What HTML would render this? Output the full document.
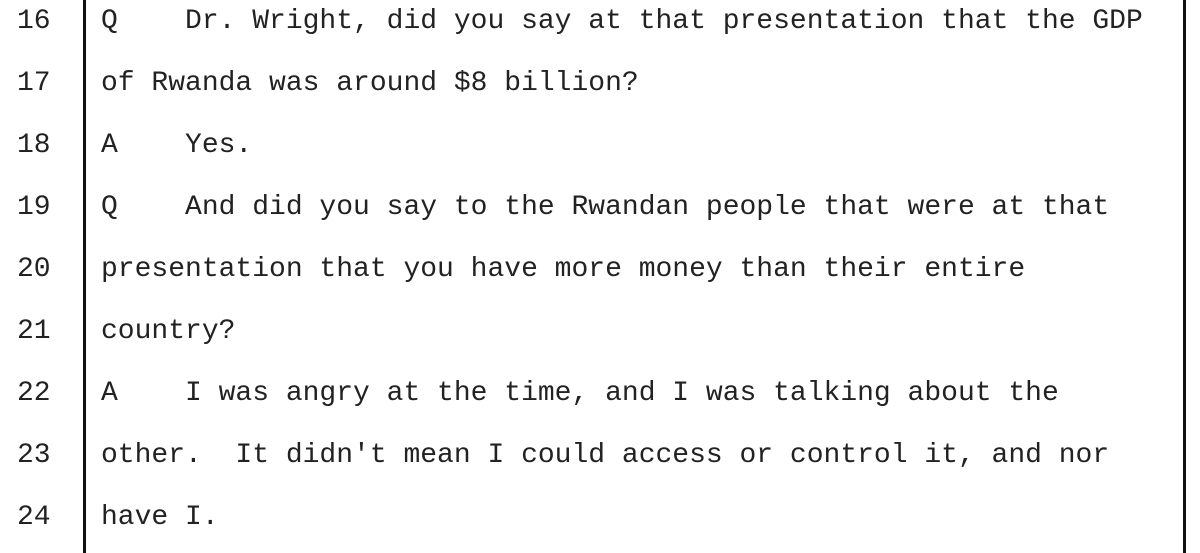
<!DOCTYPE html>
<html><head><meta charset="utf-8"><style>
html,body{margin:0;padding:0;background:#fff;width:1200px;height:553px;overflow:hidden;position:relative}
.l{position:absolute;font-family:"Liberation Mono","Courier New",monospace;font-size:28px;line-height:62px;color:#222;white-space:pre;height:62px}
.n{left:17px}
.t{left:101px}
.bar{position:absolute;top:0;height:553px;width:3px;background:#111}
</style></head><body>
<div class="bar" style="left:83px"></div>
<div class="bar" style="left:1183px"></div>
<div class="l n" style="top:-9px">16</div><div class="l t" style="top:-9px">Q    Dr. Wright, did you say at that presentation that the GDP</div>
<div class="l n" style="top:53px">17</div><div class="l t" style="top:53px">of Rwanda was around $8 billion?</div>
<div class="l n" style="top:115px">18</div><div class="l t" style="top:115px">A    Yes.</div>
<div class="l n" style="top:177px">19</div><div class="l t" style="top:177px">Q    And did you say to the Rwandan people that were at that</div>
<div class="l n" style="top:239px">20</div><div class="l t" style="top:239px">presentation that you have more money than their entire</div>
<div class="l n" style="top:301px">21</div><div class="l t" style="top:301px">country?</div>
<div class="l n" style="top:363px">22</div><div class="l t" style="top:363px">A    I was angry at the time, and I was talking about the</div>
<div class="l n" style="top:425px">23</div><div class="l t" style="top:425px">other.  It didn't mean I could access or control it, and nor</div>
<div class="l n" style="top:487px">24</div><div class="l t" style="top:487px">have I.</div>
</body></html>
